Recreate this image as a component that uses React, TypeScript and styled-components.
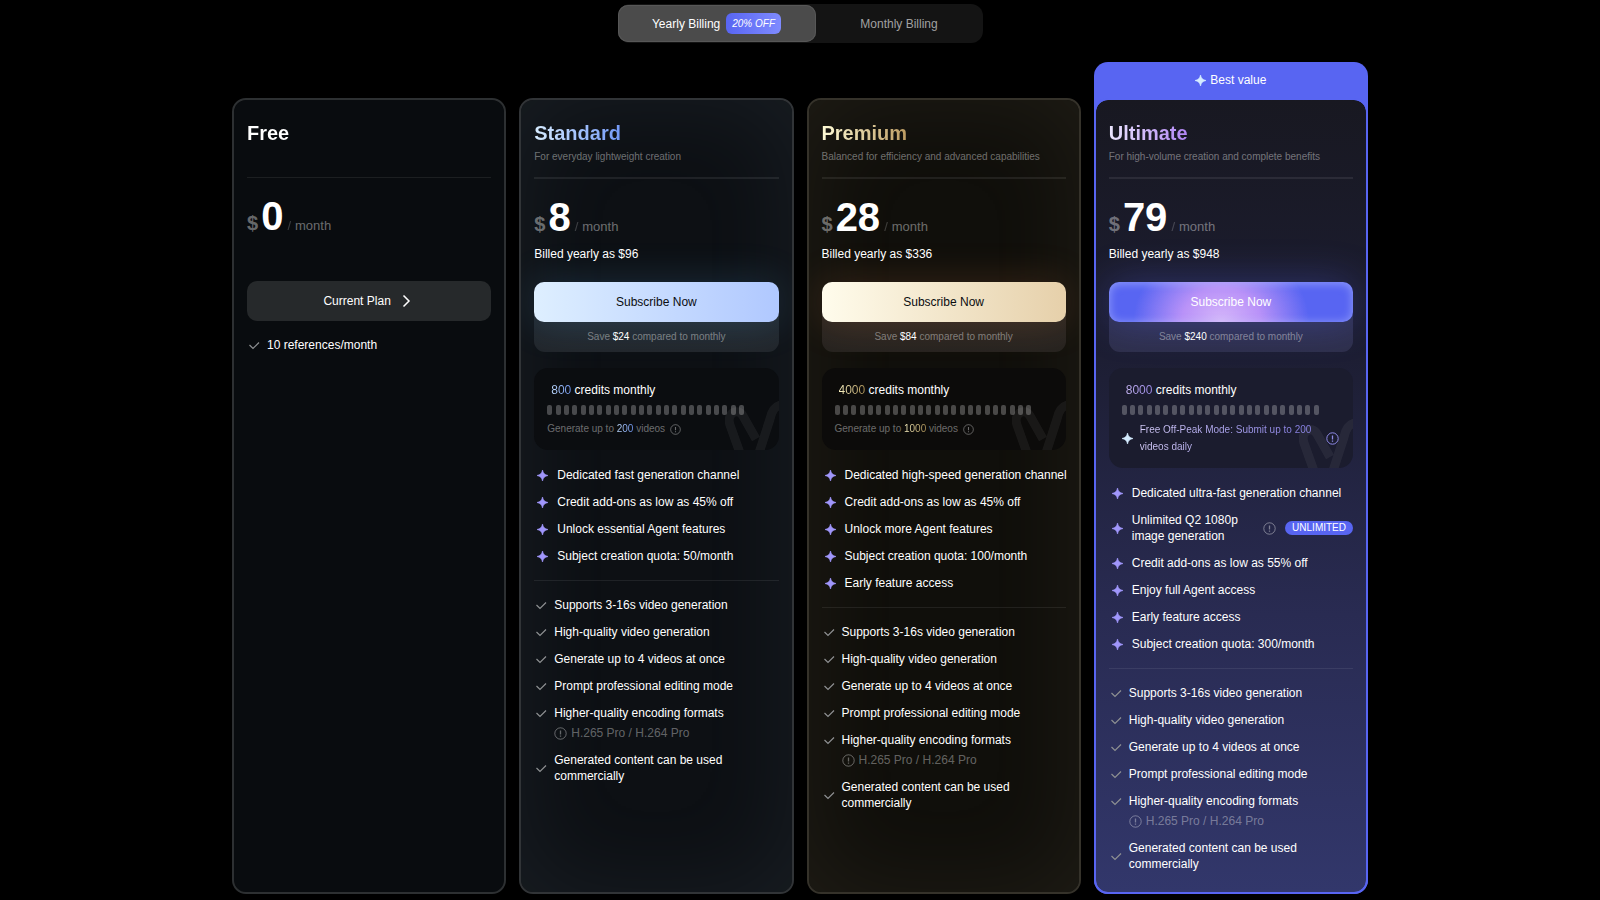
import React from "react";
import styled, { createGlobalStyle, css } from "styled-components";

type Tone = "free" | "standard" | "premium" | "ultimate";

const tones = {
  free: {
    border: "#2d3032",
    card: "#090c0f",
    inset: "none",
    title: "linear-gradient(90deg, #ffffff, #ffffff)",
    number: "linear-gradient(90deg, #ffffff, #ffffff)",
    button: "#26292b",
    glow: "none",
    save: "none",
    quota: "#0b0d10",
  },
  standard: {
    border: "#313437",
    card: "#0d1014",
    inset: "inset 0 0 100px rgba(160, 190, 220, 0.08)",
    title: "linear-gradient(90deg, #d7ecff, #7299f8)",
    number: "linear-gradient(90deg, #c0dcff, #6f95ef)",
    button: "linear-gradient(90deg, #deefff, #b0c8ff)",
    glow: "0 0 40px rgba(90, 170, 230, 0.2)",
    save: "linear-gradient(180deg, #202a33, #22262b)",
    quota: "#0b0d10",
  },
  premium: {
    border: "#35322a",
    card: "#100f0b",
    inset: "inset 0 0 100px rgba(220, 195, 150, 0.08)",
    title: "linear-gradient(90deg, #fffbd6, #bd9c62)",
    number: "linear-gradient(90deg, #fdf5c4, #a98f55)",
    button: "linear-gradient(90deg, #fffcec, #e6d0aa)",
    glow: "0 0 40px rgba(220, 130, 70, 0.2)",
    save: "linear-gradient(180deg, #2e2722, #262320)",
    quota: "#0c0b0a",
  },
  ultimate: {
    border: "#5865f2",
    card: "linear-gradient(180deg, #181821 0%, #1c1d31 30%, #292b52 65%, #32376b 100%)",
    inset: "none",
    title: "linear-gradient(90deg, #ece6ff, #b184f5)",
    number: "linear-gradient(90deg, #c6b5f4, #9c8ae8)",
    button:
      "radial-gradient(ellipse 36% 190% at 46% 100%, #d6b8fa 0%, #b992f8 45%, rgba(88, 101, 242, 0) 100%), #5865f2",
    glow: "0 0 40px rgba(88, 101, 242, 0.32), inset 0 1px 8px 1px rgba(190, 200, 255, 0.5)",
    save: "linear-gradient(180deg, #303253, #2e2f4b)",
    quota: "#1b1c2e",
  },
};

const GlobalStyle = createGlobalStyle`
  * { box-sizing: border-box; }
  body {
    margin: 0;
    background: #000;
    color: #fff;
    font-family: "Liberation Sans", Arial, sans-serif;
    font-size: 12px;
    line-height: 16px;
  }
  button { font: inherit; cursor: pointer; border: 0; }
  ul { list-style: none; margin: 0; padding: 0; }
  h2, p { margin: 0; }
  svg { display: block; flex: none; }
`;

const Page = styled.main`
  display: flex;
  flex-direction: column;
  align-items: center;
  gap: 19px;
  min-width: 1136px;
  padding: 4px 0 6px;
`;

const BillingSwitch = styled.div`
  display: grid;
  grid-template-columns: 198px 167px;
  height: 39px;
  padding: 1px 0;
  border-radius: 12px;
  background: #141414;
`;

const BillingOption = styled.button<{ $active?: boolean }>`
  display: flex;
  align-items: center;
  justify-content: center;
  gap: 6px;
  padding: 0;
  border-radius: 10px;
  background: transparent;
  color: #a1a1a1;
  ${(p) =>
    p.$active &&
    css`
      background: #4b4b4b;
      color: #fff;
      box-shadow: inset 0 0 0 1px #575757;
    `}
`;

const Discount = styled.span`
  padding: 0 6px;
  border-radius: 6px;
  background: linear-gradient(90deg, #5865f2, #7f8bff);
  font-size: 10px;
  font-style: italic;
  line-height: 21px;
`;

const Plans = styled.div`
  display: grid;
  grid-template-columns: repeat(4, minmax(0, 1fr));
  gap: 13px;
  width: 71%;
  min-width: 1136px;
`;

const Slot = styled.div<{ $featured?: boolean }>`
  display: flex;
  flex-direction: column;
  padding-top: ${(p) => (p.$featured ? 0 : 36)}px;
  border-radius: 14px;
  background: ${(p) => (p.$featured ? "#5865f2" : "transparent")};
`;

const BestValue = styled.div`
  display: flex;
  align-items: center;
  justify-content: center;
  gap: 4px;
  height: 36px;
`;

const Card = styled.section<{ $tone: Tone }>`
  flex: 1;
  overflow: hidden;
  padding: 21px 13px 20px;
  border: 2px solid ${(p) => tones[p.$tone].border};
  border-radius: 14px;
  background: ${(p) => tones[p.$tone].card};
  background-clip: padding-box;
  box-shadow: ${(p) => tones[p.$tone].inset};
`;

const Title = styled.h2<{ $tone: Tone }>`
  width: max-content;
  background: ${(p) => tones[p.$tone].title};
  background-clip: text;
  color: transparent;
  font-size: 20px;
  line-height: 24px;
`;

const Tagline = styled.p`
  height: 32px;
  padding-top: 4px;
  color: rgba(255, 255, 255, 0.4);
  font-size: 10px;
  line-height: 16px;
`;

const Rule = styled.hr<{ $thick?: boolean }>`
  height: ${(p) => (p.$thick ? 2 : 1)}px;
  margin: 0;
  border: 0;
  background: rgba(255, 255, 255, 0.08);
`;

const Price = styled.div`
  display: flex;
  align-items: baseline;
  padding-top: 14px;
  font-size: 40px;
  font-weight: 700;
  line-height: 48px;
`;

const Currency = styled.span`
  margin-right: 3px;
  color: rgba(255, 255, 255, 0.4);
  font-size: 20px;
  line-height: 24px;
`;

const Period = styled.span`
  margin-left: 4px;
  color: rgba(255, 255, 255, 0.4);
  font-size: 13px;
  font-weight: 400;
  line-height: 16px;
`;

const Slash = styled.span`
  margin-right: 4px;
  opacity: 0.5;
`;

const Billed = styled.p`
  height: 41px;
  padding-top: 5px;
`;

const Offer = styled.div<{ $tone: Tone }>`
  border-radius: 11px;
  background: ${(p) => tones[p.$tone].save};
`;

const PlanButton = styled.button<{ $tone: Tone }>`
  display: flex;
  align-items: center;
  justify-content: center;
  gap: 8px;
  width: 100%;
  height: 40px;
  border-radius: 10px;
  background: ${(p) => tones[p.$tone].button};
  box-shadow: ${(p) => tones[p.$tone].glow};
  color: ${(p) => (p.$tone === "standard" || p.$tone === "premium" ? "#0b0d10" : "#fff")};
`;

const Saving = styled.p`
  height: 30px;
  color: rgba(255, 255, 255, 0.4);
  font-size: 10px;
  line-height: 30px;
  text-align: center;
  strong {
    color: #fff;
    font-weight: 400;
  }
`;

const Quota = styled.div<{ $tone: Tone }>`
  position: relative;
  overflow: hidden;
  margin: 16px 0 17px;
  padding: 14px 14px 13px 13px;
  border-radius: 14px;
  background: ${(p) => tones[p.$tone].quota};
`;

const Watermark = styled.svg`
  position: absolute;
  right: 0;
  bottom: 0;
`;

const Credits = styled.p`
  padding-left: 4px;
`;

const Accent = styled.span<{ $tone: Tone }>`
  background: ${(p) => tones[p.$tone].number};
  background-clip: text;
  color: transparent;
`;

const Meter = styled.div`
  display: grid;
  grid-template-columns: repeat(24, 5px);
  justify-content: space-between;
  width: 197px;
  margin: 7px 0 6px;
`;

const Tick = styled.span`
  height: 10px;
  border-radius: 2px;
  background: rgba(255, 255, 255, 0.25);
`;

const Estimate = styled.div`
  display: flex;
  align-items: center;
  gap: 5px;
  color: rgba(255, 255, 255, 0.4);
  font-size: 10px;
  line-height: 16px;
`;

const OffPeak = styled.div`
  display: flex;
  align-items: center;
  gap: 7px;
  color: #8f8be8;
  font-size: 10px;
  line-height: 17px;
`;

const OffPeakText = styled.span`
  flex: 1;
  background: linear-gradient(90deg, #d6cdfa, #8079e2);
  background-clip: text;
  color: transparent;
`;

const Features = styled.ul<{ $kind: "perk" | "basic" }>`
  display: grid;
  gap: 11px;
  padding: ${(p) => (p.$kind === "perk" ? "0 0 16px 3px" : "16px 0 0 1px")};
`;

const Feature = styled.li<{ $kind: "perk" | "basic" }>`
  display: flex;
  align-items: center;
  gap: ${(p) => (p.$kind === "perk" ? 9 : 6)}px;
`;

const FeatureText = styled.span<{ $narrow?: boolean }>`
  ${(p) =>
    p.$narrow
      ? css`
          width: 120px;
          margin-right: auto;
        `
      : css`
          white-space: nowrap;
        `}
`;

const Wrapping = styled.span`
  max-width: 200px;
`;

const Muted = styled.span`
  color: rgba(255, 255, 255, 0.4);
`;

const Pill = styled.span`
  padding: 0 7px;
  border-radius: 7px;
  background: #5865f2;
  font-size: 10px;
  line-height: 14px;
`;

const Format = styled.li`
  display: flex;
  align-items: center;
  gap: 4px;
  margin-top: -7px;
  padding-left: 19px;
  color: rgba(255, 255, 255, 0.36);
`;

const Sparkle = ({ size = 11, fill = "#a096fb" }: { size?: number; fill?: string }) => (
  <svg width={size} height={size} viewBox="0 0 12 12" aria-hidden="true">
    <path
      d="M6 0C6.700 3.600 8.400 5.300 12 6C8.400 6.700 6.700 8.400 6 12C5.300 8.400 3.600 6.700 0 6C3.600 5.300 5.300 3.600 6 0Z"
      fill={fill}
      stroke={fill}
      strokeWidth="0.7"
    />
  </svg>
);

const Check = () => (
  <svg width="13" height="13" viewBox="0 0 13 13" fill="none" stroke="#8e9092" strokeWidth="1.200" aria-hidden="true">
    <path d="M1.500 6L5 9.500L11 3.500" />
  </svg>
);

const Info = ({ size = 13 }: { size?: number }) => (
  <svg width={size} height={size} viewBox="0 0 13 13" fill="none" stroke="currentColor" aria-hidden="true">
    <circle cx="6.500" cy="6.500" r="5.700" />
    <path d="M6.500 3.400V7.500M6.500 8.600V9.800" strokeWidth="1.300" />
  </svg>
);

const Mark = () => (
  <Watermark width="54" height="49" viewBox="0 0 54 49" fill="none" aria-hidden="true">
    <g stroke="#fff" strokeWidth="9" opacity="0.055" strokeLinejoin="round">
      <path d="M15 52L5 24C1 12 13 6 18 15L31 38" />
      <path d="M34 52L45 18C47 9 50 5 56 4" />
    </g>
  </Watermark>
);

const basics = [
  "Supports 3-16s video generation",
  "High-quality video generation",
  "Generate up to 4 videos at once",
  "Prompt professional editing mode",
  "Higher-quality encoding formats",
];

interface Plan {
  tone: Tone;
  name: string;
  tagline: string;
  price: number;
  yearly: number;
  saving: number;
  credits: number;
  videos?: number;
  perks: string[];
}

const plans: Plan[] = [
  {
    tone: "standard",
    name: "Standard",
    tagline: "For everyday lightweight creation",
    price: 8,
    yearly: 96,
    saving: 24,
    credits: 800,
    videos: 200,
    perks: [
      "Dedicated fast generation channel",
      "Credit add-ons as low as 45% off",
      "Unlock essential Agent features",
      "Subject creation quota: 50/month",
    ],
  },
  {
    tone: "premium",
    name: "Premium",
    tagline: "Balanced for efficiency and advanced capabilities",
    price: 28,
    yearly: 336,
    saving: 84,
    credits: 4000,
    videos: 1000,
    perks: [
      "Dedicated high-speed generation channel",
      "Credit add-ons as low as 45% off",
      "Unlock more Agent features",
      "Subject creation quota: 100/month",
      "Early feature access",
    ],
  },
  {
    tone: "ultimate",
    name: "Ultimate",
    tagline: "For high-volume creation and complete benefits",
    price: 79,
    yearly: 948,
    saving: 240,
    credits: 8000,
    perks: [
      "Dedicated ultra-fast generation channel",
      "Unlimited Q2 1080p image generation",
      "Credit add-ons as low as 55% off",
      "Enjoy full Agent access",
      "Early feature access",
      "Subject creation quota: 300/month",
    ],
  },
];

const PriceLine = ({ amount }: { amount: number }) => (
  <Price>
    <Currency>$</Currency>
    {amount}
    <Period>
      <Slash>/</Slash>month
    </Period>
  </Price>
);

const PaidPlan = ({ plan }: { plan: Plan }) => {
  const { tone } = plan;
  const featured = tone === "ultimate";
  return (
    <Slot $featured={featured}>
      {featured && (
        <BestValue>
          <Sparkle fill="#d5ecff" />
          Best value
        </BestValue>
      )}
      <Card $tone={tone}>
        <Title $tone={tone}>{plan.name}</Title>
        <Tagline>{plan.tagline}</Tagline>
        <Rule $thick />
        <PriceLine amount={plan.price} />
        <Billed>Billed yearly as ${plan.yearly}</Billed>
        <Offer $tone={tone}>
          <PlanButton type="button" $tone={tone}>
            Subscribe Now
          </PlanButton>
          <Saving>
            Save <strong>${plan.saving}</strong> compared to monthly
          </Saving>
        </Offer>
        <Quota $tone={tone}>
          <Mark />
          <Credits>
            <Accent $tone={tone}>{plan.credits}</Accent> credits monthly
          </Credits>
          <Meter>
            {Array.from({ length: 24 }, (_, i) => (
              <Tick key={i} />
            ))}
          </Meter>
          {plan.videos ? (
            <Estimate>
              <span>
                Generate up to <Accent $tone={tone}>{plan.videos}</Accent> videos
              </span>
              <Info size={11} />
            </Estimate>
          ) : (
            <OffPeak>
              <Sparkle fill="#d5ecff" />
              <OffPeakText>Free Off-Peak Mode: Submit up to 200 videos daily</OffPeakText>
              <Info />
            </OffPeak>
          )}
        </Quota>
        <Features $kind="perk">
          {plan.perks.map((perk) => {
            const unlimited = perk.startsWith("Unlimited");
            return (
              <Feature key={perk} $kind="perk">
                <Sparkle />
                <FeatureText $narrow={unlimited}>{perk}</FeatureText>
                {unlimited && (
                  <>
                    <Muted>
                      <Info />
                    </Muted>
                    <Pill>UNLIMITED</Pill>
                  </>
                )}
              </Feature>
            );
          })}
        </Features>
        <Rule />
        <Features $kind="basic">
          {basics.map((text) => (
            <Feature key={text} $kind="basic">
              <Check />
              <FeatureText>{text}</FeatureText>
            </Feature>
          ))}
          <Format>
            <Info />
            H.265 Pro / H.264 Pro
          </Format>
          <Feature $kind="basic">
            <Check />
            <Wrapping>Generated content can be used commercially</Wrapping>
          </Feature>
        </Features>
      </Card>
    </Slot>
  );
};

export default function App() {
  return (
    <>
      <GlobalStyle />
      <Page>
        <BillingSwitch>
          <BillingOption type="button" $active>
            Yearly Billing <Discount>20% OFF</Discount>
          </BillingOption>
          <BillingOption type="button">Monthly Billing</BillingOption>
        </BillingSwitch>
        <Plans>
          <Slot>
            <Card $tone="free">
              <Title $tone="free">Free</Title>
              <Tagline />
              <Rule />
              <PriceLine amount={0} />
              <Billed />
              <PlanButton type="button" $tone="free">
                Current Plan
                <svg width="16" height="14" viewBox="0 0 16 14" fill="none" stroke="#fff" strokeWidth="1.500" aria-hidden="true">
                  <path d="M4.500 1.500L10 7L4.500 12.500" />
                </svg>
              </PlanButton>
              <Features $kind="basic">
                <Feature $kind="basic">
                  <Check />
                  <FeatureText>10 references/month</FeatureText>
                </Feature>
              </Features>
            </Card>
          </Slot>
          {plans.map((plan) => (
            <PaidPlan key={plan.name} plan={plan} />
          ))}
        </Plans>
      </Page>
    </>
  );
}
